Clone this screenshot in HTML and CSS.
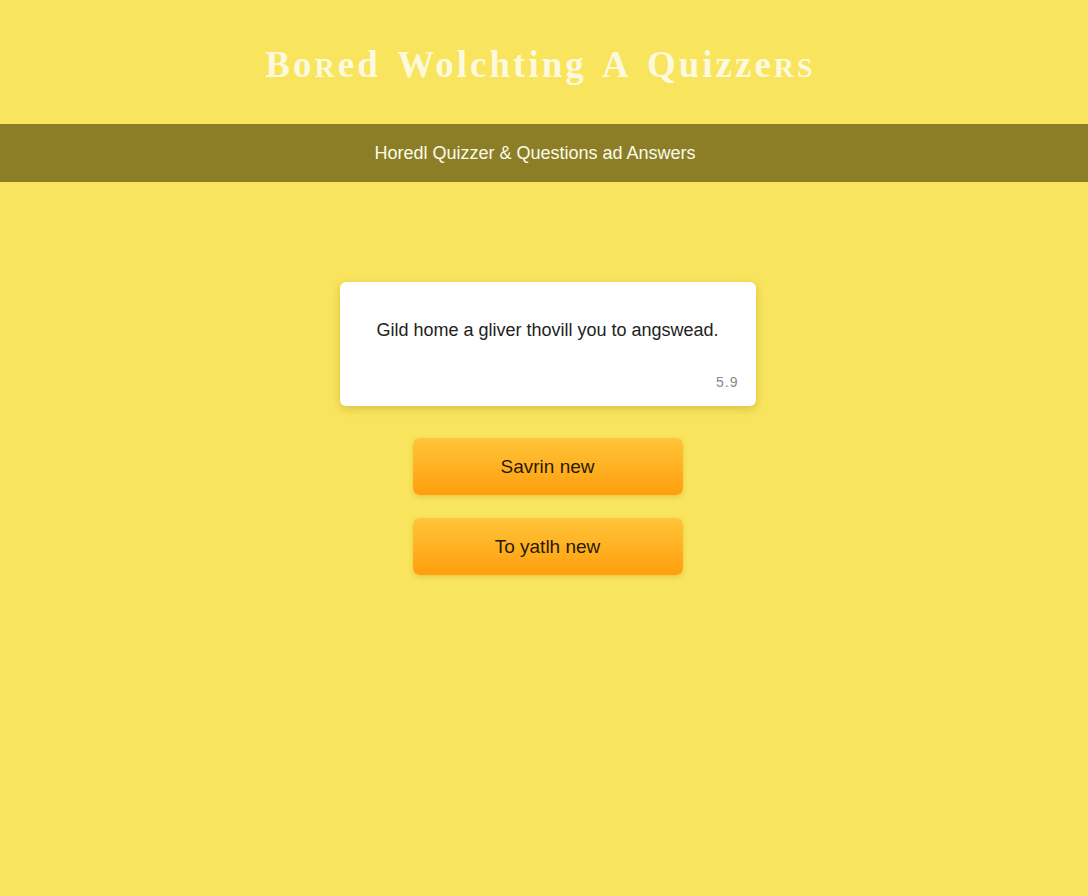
FILE: index.html
```html
<!DOCTYPE html>
<html lang="en">
<head>
    <meta charset="UTF-8">
    <meta name="viewport" content="width=device-width, initial-scale=1.0">
    <title>Bored Wolchting A Quizzers</title>
    <link rel="stylesheet" href="styles.css">
</head>
<body>
    <header class="site-header">
        <h1 class="site-title">Bo<span class="sc">r</span>ed Wolchting A Quizze<span class="sc">rs</span></h1>
    </header>

    <nav class="band">Horedl Quizzer &amp; Questions ad Answers</nav>

    <main class="quiz">
        <div class="question-card">
            <p class="question-text">Gild home a gliver thovill you to angswead.</p>
            <span class="question-score">5.9</span>
        </div>

        <button class="quiz-btn">Savrin new</button>
        <button class="quiz-btn">To yatlh new</button>
    </main>
</body>
</html>
```

FILE: styles.css
```css
body {
    margin: 0;
    min-height: 100vh;
    background-color: #f8e45d;
    font-family: "Liberation Sans", Arial, sans-serif;
}
.site-header {
    height: 124px;
    display: flex;
    align-items: center;
    justify-content: center;
    padding-right: 7px;
    box-sizing: border-box;
}
.site-title {
    margin: 0;
    padding-top: 4px;
    font-family: "Liberation Serif", "Times New Roman", serif;
    font-weight: bold;
    font-size: 37px;
    letter-spacing: 3px;
    word-spacing: 5px;
    color: #fdf9dc;
}
.sc {
    font-size: 28px;
    text-transform: uppercase;
}
.band {
    height: 58px;
    display: flex;
    align-items: center;
    justify-content: center;
    padding-right: 18px;
    background-color: #8b7e26;
    color: #fdfbe8;
    font-size: 18px;
    letter-spacing: 0;
}
.quiz {
    display: flex;
    flex-direction: column;
    align-items: center;
    padding-top: 100px;
    padding-left: 7px;
}
.question-card {
    position: relative;
    width: 416px;
    height: 124px;
    box-sizing: border-box;
    padding-top: 38px;
    background-color: #fff;
    border-radius: 6px;
    box-shadow: 0 3px 8px rgba(150, 120, 20, 0.3);
    text-align: center;
    margin-bottom: 32px;
}
.question-text {
    margin: 0;
    font-size: 18px;
    color: #222;
}
.question-score {
    position: absolute;
    right: 17px;
    bottom: 16px;
    font-size: 14px;
    color: #888;
    letter-spacing: 1px;
}
.quiz-btn {
    width: 270px;
    height: 57px;
    margin-bottom: 23px;
    border: none;
    border-radius: 7px;
    background: linear-gradient(#ffc53a, #ff9e0b);
    box-shadow: 0 2px 4px rgba(200, 120, 0, 0.25);
    font-family: "Liberation Sans", Arial, sans-serif;
    font-size: 19px;
    color: #2a1a05;
    cursor: pointer;
}
```
